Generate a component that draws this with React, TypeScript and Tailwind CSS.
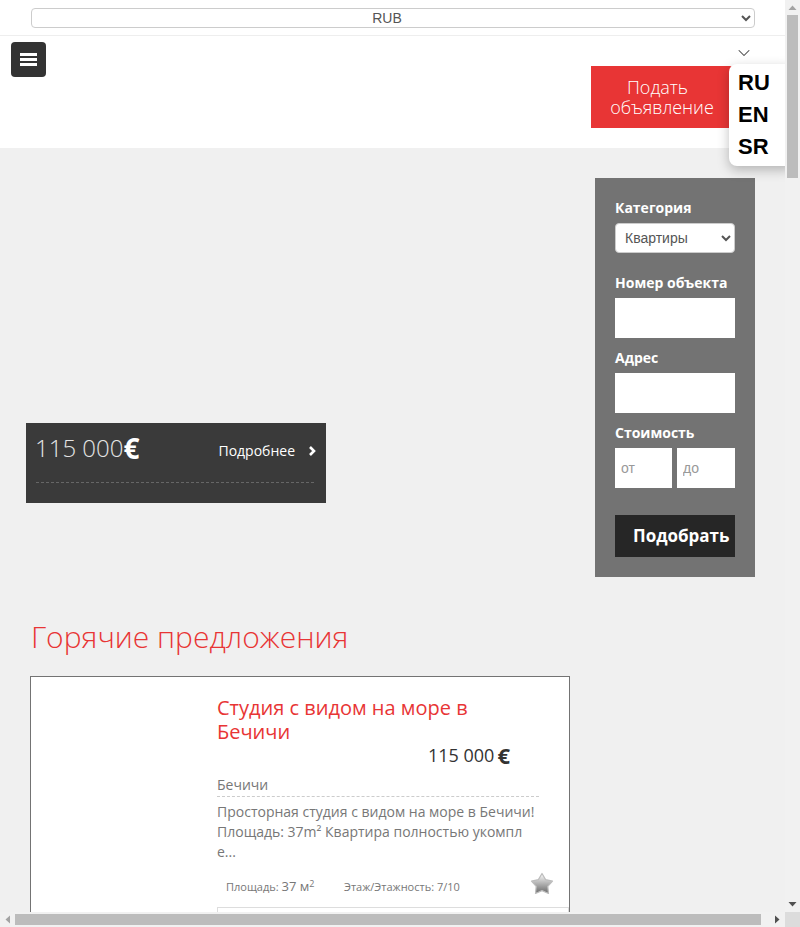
import { ChevronDown } from "lucide-react";

const open = "font-['Open_Sans',sans-serif]";
const label = "block text-[14px] leading-5 font-bold text-white";

function Star() {
  return (
    <svg width="24" height="24" viewBox="0 0 24 24" className="block">
      <defs>
        <linearGradient id="starFill" x1="0.5" y1="0.05" x2="0.5" y2="0.95">
          <stop offset="0" stopColor="#f5f5f5" />
          <stop offset="1" stopColor="#707070" />
        </linearGradient>
      </defs>
      <path
        d="M12 1.5L15.6 7.6 22.5 9.1 17.8 14.4 18.5 21.5 12 18.6 5.5 21.5 6.2 14.4 1.5 9.1 8.4 7.6z"
        fill="url(#starFill)"
        stroke="#bdbdbd"
        strokeWidth="1.2"
        strokeLinejoin="round"
      />
    </svg>
  );
}

function Arrow({ points, color }: { points: string; color: string }) {
  return (
    <svg width="15" height="15" viewBox="0 0 15 15" className="block shrink-0">
      <polygon points={points} fill={color} />
    </svg>
  );
}

export default function App() {
  return (
    <div className="grid h-[927px] w-[800px] grid-cols-[785px_15px] grid-rows-[912px_15px] overflow-hidden">
      <div className="overflow-hidden">
        <div className={`relative min-h-[912px] bg-[#f0f0f0] ${open}`}>
          <header className="bg-white">
            <div className="flex h-[36px] items-start border-b border-[#eeeeee] pl-[31px] pr-[30px] pt-[8px]">
              <select className="h-[20px] w-full rounded-[4px] border border-[#cccccc] bg-white text-center font-['Liberation_Sans',sans-serif] text-[14px] leading-none text-[#555555] [text-align-last:center]">
                <option>RUB</option>
              </select>
            </div>
            <div className="relative h-[112px]">
              <button className="absolute left-[11px] top-[6px] flex h-[35px] w-[35px] flex-col items-center justify-center gap-[2px] rounded-[4px] bg-[#333333]">
                <span className="h-[3px] w-[17px] bg-white" />
                <span className="h-[3px] w-[17px] bg-white" />
                <span className="h-[3px] w-[17px] bg-white" />
              </button>
              <ChevronDown className="absolute left-[734px] top-[7px] text-[#444444]" size={20} strokeWidth={1.25} />
              <div className="absolute left-[591px] top-[30px] flex h-[62px] w-[142px] items-center justify-center bg-[#e83535] text-center text-[18px] font-light leading-5 text-white">
                <span>
                  <span className="inline-block pr-[9px]">Подать</span>
                  <br />
                  объявление
                </span>
              </div>
            </div>
          </header>

          <div className="absolute left-[729px] top-[64px] z-10 h-[102px] w-[65px] rounded-lg bg-white pl-[9px] pt-[3px] font-['Liberation_Sans',sans-serif] text-[22px] font-bold leading-[32px] text-black shadow-[0_4px_12px_rgba(0,0,0,0.25)]">
            <div>RU</div>
            <div>EN</div>
            <div>SR</div>
          </div>

          <section className="flex justify-between pl-[26px] pr-[30px] pt-[30px]">
            <div className="mt-[245px] h-[80px] w-[300px] bg-[#3a3a3a] pl-[10px] pr-[12px] text-white">
              <div className="flex h-[60px] items-center justify-between border-b border-dashed border-[#666666] pb-[10px]">
                <div className="-ml-[1px] flex items-center text-[24px] font-light leading-none text-[#e4e4e4]">
                  115 000<span className="text-[28px] font-bold text-white">€</span>
                </div>
                <div className="-mr-[2px] flex items-center gap-[13px] pt-[6px] text-[14px]">
                  Подробнее
                  <svg width="8" height="10" viewBox="0 0 8 10" className="block">
                    <polyline points="2,1 6,5 2,9" fill="none" stroke="white" strokeWidth="2.6" />
                  </svg>
                </div>
              </div>
            </div>

            <form className="h-[399px] w-[160px] bg-[#737373] px-[20px] pt-[20px]">
              <label className={label}>Категория</label>
              <select className="mt-[5px] block h-[30px] w-[120px] rounded-[4px] border border-[#cccccc] bg-white pl-[5px] font-['Liberation_Sans',sans-serif] text-[14px] text-[#555555]">
                <option>Квартиры</option>
              </select>
              <label className={`${label} mt-[20px]`}>Номер объекта</label>
              <input className="mt-[5px] block h-[40px] w-[120px] bg-white" />
              <label className={`${label} mt-[10px]`}>Адрес</label>
              <input className="mt-[5px] block h-[40px] w-[120px] bg-white" />
              <label className={`${label} mt-[10px]`}>Стоимость</label>
              <div className="mt-[5px] flex justify-between">
                <input placeholder="от" className="h-[40px] w-[57px] bg-white pl-[6px] font-['Liberation_Sans',sans-serif] text-[14px] placeholder:text-[#999999]" />
                <input placeholder="до" className="h-[40px] w-[58px] bg-white pl-[6px] font-['Liberation_Sans',sans-serif] text-[14px] placeholder:text-[#999999]" />
              </div>
              <button type="button" className="mt-[27px] block h-[42px] w-[120px] bg-[#262626] pl-[18px] text-left text-[17px] font-bold text-white">
                Подобрать
              </button>
            </form>
          </section>

          <h2 className="ml-[31px] mt-[39px] text-[30px] font-light leading-[42px] text-[#e83535]">Горячие предложения</h2>

          <article className="ml-[30px] mt-[18px] flex w-[540px] border border-[#737373] bg-white pb-[100px] pl-[186px]">
            <div className="w-[352px] pt-[19px]">
              <h3 className="w-[300px] text-[20px] font-normal leading-[24px] text-[#e83535]">Студия с видом на море в Бечичи</h3>
              <div className="flex h-[22px] w-[293px] items-center justify-end text-[18px] text-[#333333]">
                115 000<span className="ml-[3px] text-[22px] font-bold leading-none">€</span>
              </div>
              <div className="mt-[9px] w-[322px] border-b border-dashed border-[#cccccc] pb-[1px] text-[14px] leading-[20px] text-[#777777]">Бечичи</div>
              <p className="mt-[5px] w-[322px] break-all text-[14px] leading-[20px] text-[#777777]">
                Просторная студия с видом на море в Бечичи! Площадь: 37m² Квартира полностью укомпл е...
              </p>
              <div className="mt-[10px] flex h-[30px] items-center pl-[9px] pr-[5px] text-[11px] text-[#777777]">
                <span className="w-[118px]">
                  Площадь: <span className="text-[13px]">37 м<sup className="text-[9px]">2</sup></span>
                </span>
                <span>Этаж/Этажность: 7/10</span>
                <span className="-mt-[6px] ml-auto pr-[10px]"><Star /></span>
              </div>
              <div className="mt-[5px] h-[60px] border border-[#dddddd] bg-white" />
            </div>
          </article>
        </div>
      </div>

      <div className="flex flex-col items-center bg-[#f1f1f1]">
        <Arrow points="3.5,10 7.5,5.5 11.5,10" color="#a3a3a3" />
        <div className="h-[163px] w-[11px] bg-[#bcbcbc]" />
        <div className="flex-1" />
        <Arrow points="3.5,5 11.5,5 7.5,9.5" color="#505050" />
      </div>
      <div className="flex items-center bg-[#f1f1f1]">
        <Arrow points="10,3.5 10,11.5 5.5,7.5" color="#a3a3a3" />
        <div className="h-[11px] w-[746px] bg-[#bcbcbc]" />
        <div className="flex-1" />
        <Arrow points="5,3.5 5,11.5 9.5,7.5" color="#505050" />
      </div>
      <div className="bg-[#dcdcdc]" />
    </div>
  );
}
